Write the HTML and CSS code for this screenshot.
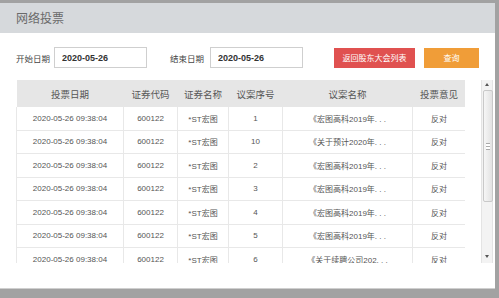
FILE: index.html
```html
<!DOCTYPE html>
<html lang="zh">
<head>
  <meta charset="UTF-8" />
  <title>网络投票</title>
  <link rel="stylesheet" href="styles.css">
</head>
<body>
  <div class="window">
    <div class="title-bar">网络投票</div>

    <div class="toolbar">
      <label class="label">开始日期</label>
      <input class="date-input" type="text" value="2020-05-26">
      <label class="label label-end">结束日期</label>
      <input class="date-input" type="text" value="2020-05-26">
      <button class="btn btn-back">返回股东大会列表</button>
      <button class="btn btn-query">查询</button>
    </div>

    <div class="table-area">
      <div class="table-wrap">
        <table class="vote-table">
          <thead>
            <tr>
              <th class="c-date">投票日期</th>
              <th class="c-code">证券代码</th>
              <th class="c-name">证券名称</th>
              <th class="c-no">议案序号</th>
              <th class="c-title">议案名称</th>
              <th class="c-opinion">投票意见</th>
            </tr>
          </thead>
          <tbody>
            <tr><td>2020-05-26 09:38:04</td><td>600122</td><td>*ST宏图</td><td>1</td><td>《宏图高科2019年. . .</td><td>反对</td></tr>
            <tr><td>2020-05-26 09:38:04</td><td>600122</td><td>*ST宏图</td><td>10</td><td>《关于预计2020年. . .</td><td>反对</td></tr>
            <tr><td>2020-05-26 09:38:04</td><td>600122</td><td>*ST宏图</td><td>2</td><td>《宏图高科2019年. . .</td><td>反对</td></tr>
            <tr><td>2020-05-26 09:38:04</td><td>600122</td><td>*ST宏图</td><td>3</td><td>《宏图高科2019年. . .</td><td>反对</td></tr>
            <tr><td>2020-05-26 09:38:04</td><td>600122</td><td>*ST宏图</td><td>4</td><td>《宏图高科2019年. . .</td><td>反对</td></tr>
            <tr><td>2020-05-26 09:38:04</td><td>600122</td><td>*ST宏图</td><td>5</td><td>《宏图高科2019年. . .</td><td>反对</td></tr>
            <tr><td>2020-05-26 09:38:04</td><td>600122</td><td>*ST宏图</td><td>6</td><td>《关于续聘公司202. . .</td><td>反对</td></tr>
          </tbody>
        </table>
      </div>

      <div class="scrollbar">
        <div class="arrow arrow-up"></div>
        <div class="thumb"><span class="grip"></span></div>
        <div class="arrow arrow-down"></div>
      </div>
    </div>
  </div>
</body>
</html>
```

FILE: styles.css
```css
body {
  margin: 0;
  background: #a2a2a2;
  font-family: "Liberation Sans", "Noto Sans CJK SC", sans-serif;
  color: #555;
}

.window {
  margin: 3px 4px 0 0;
  height: 286px;
  background: #fff;
  border-bottom: 1px solid #cfcfcf;
  box-sizing: border-box;
}

.title-bar {
  height: 30px;
  line-height: 30px;
  padding-left: 16px;
  background: #d6d9dc;
  color: #6a6a6a;
  font-size: 12px;
  font-family: "Noto Sans CJK SC", sans-serif;
}

.toolbar {
  display: flex;
  align-items: center;
  padding: 14px 0 0 16px;
  height: 21px;
}

.label {
  font-size: 8.5px;
  color: #444;
  font-family: "Noto Sans CJK SC", sans-serif;
  margin-right: 4px;
}

.label-end {
  margin-left: 23px;
  margin-right: 6px;
}

.date-input {
  width: 93px;
  height: 21px;
  box-sizing: border-box;
  border: 1px solid #cfcfcf;
  padding: 0 0 0 7px;
  font-family: "Liberation Sans", sans-serif;
  font-size: 9px;
  font-weight: bold;
  color: #333;
  outline: none;
}

.btn {
  height: 20px;
  border: none;
  color: #fff;
  font-size: 8px;
  font-family: "Noto Sans CJK SC", sans-serif;
  padding: 0;
  cursor: pointer;
}

.btn-back {
  width: 81px;
  margin-left: 31px;
  background: #e05150;
}

.btn-query {
  width: 55px;
  margin-left: 9px;
  background: #f09d38;
}

.table-area {
  display: flex;
  margin-top: 12px;
}

.table-wrap {
  width: 449px;
  height: 183px;
  margin-left: 16px;
  overflow: hidden;
}

.vote-table {
  width: 449px;
  border-collapse: collapse;
  table-layout: fixed;
}

.vote-table th {
  height: 27px;
  background: #e6e6e6;
  font-weight: normal;
  font-size: 9.5px;
  color: #555;
  font-family: "Noto Sans CJK SC", sans-serif;
  padding: 0;
}

.vote-table td {
  height: 22.5px;
  padding: 0;
  text-align: center;
  font-size: 8px;
  color: #555;
  border: 1px solid #e8e8e8;
  border-top: none;
  white-space: nowrap;
  overflow: hidden;
}

.c-date { width: 107px; }
.c-code { width: 54px; }
.c-name { width: 51px; }
.c-no { width: 54px; }
.c-title { width: 130px; }
.c-opinion { width: 53px; }

.scrollbar {
  position: relative;
  width: 12px;
  height: 183px;
  margin-left: 16px;
  background: #f3f3f3;
  border-left: 1px solid #e4e4e4;
  border-right: 1px solid #e4e4e4;
  box-sizing: border-box;
}

.arrow {
  position: absolute;
  left: 3px;
  width: 0;
  height: 0;
  border-left: 2px solid transparent;
  border-right: 2px solid transparent;
}

.arrow-up {
  top: 3px;
  border-bottom: 3px solid #555;
}

.arrow-down {
  bottom: 5px;
  border-top: 3px solid #555;
}

.thumb {
  position: absolute;
  top: 10px;
  left: 1px;
  width: 8px;
  height: 110px;
  border: 1px solid #c9c9c9;
  border-radius: 2px;
  background: linear-gradient(to right, #f6f6f6, #e2e2e2);
  display: flex;
  align-items: center;
  justify-content: center;
}

.grip {
  width: 4px;
  height: 5px;
  border-top: 1px solid #aaa;
  border-bottom: 1px solid #aaa;
  background: linear-gradient(#fff 40%, #aaa 40%, #aaa 60%, #fff 60%);
}
```
